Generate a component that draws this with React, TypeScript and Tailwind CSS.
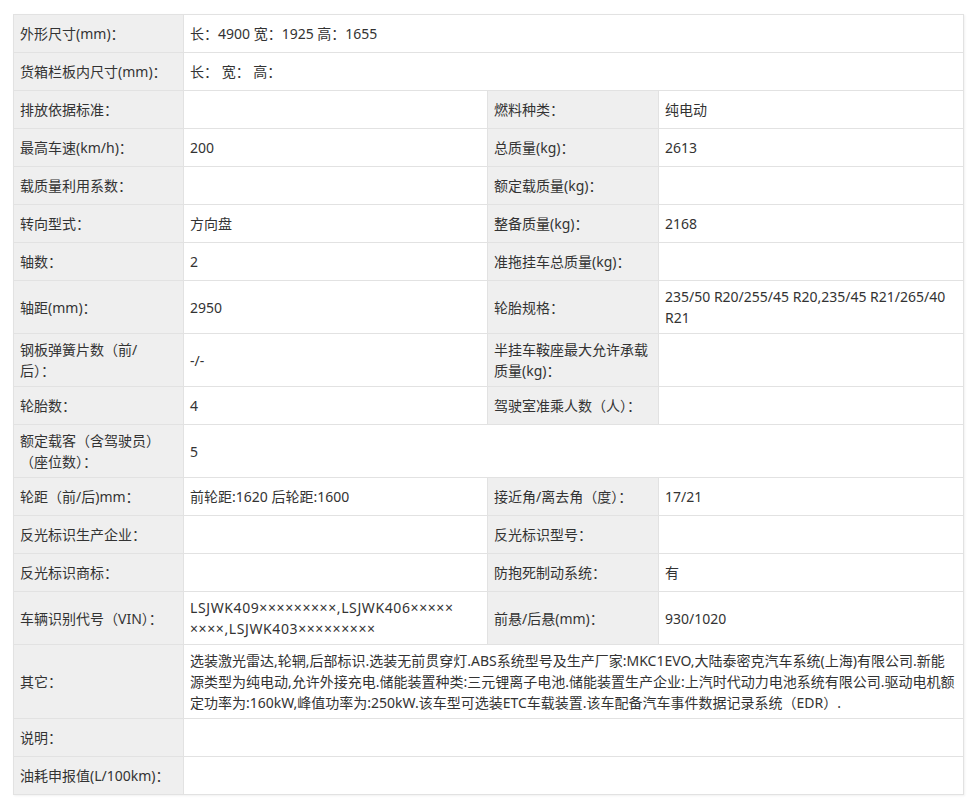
type Cell = { label: React.ReactNode; value?: React.ReactNode }
type Row = { cells: Cell[]; wide?: boolean }

const rows: Row[] = [
  { wide: true, cells: [{ label: '外形尺寸(mm)：', value: '长：4900 宽：1925 高：1655' }] },
  { wide: true, cells: [{ label: '货箱栏板内尺寸(mm)：', value: '长： 宽： 高：' }] },
  { cells: [{ label: '排放依据标准：' }, { label: '燃料种类：', value: '纯电动' }] },
  { cells: [{ label: '最高车速(km/h)：', value: '200' }, { label: '总质量(kg)：', value: '2613' }] },
  { cells: [{ label: '载质量利用系数：' }, { label: '额定载质量(kg)：' }] },
  { cells: [{ label: '转向型式：', value: '方向盘' }, { label: '整备质量(kg)：', value: '2168' }] },
  { cells: [{ label: '轴数：', value: '2' }, { label: '准拖挂车总质量(kg)：' }] },
  {
    cells: [
      { label: '轴距(mm)：', value: '2950' },
      {
        label: '轮胎规格：',
        value: (
          <>
            235/50 R20/255/45 R20,235/45 R21/265/40
            <br />
            R21
          </>
        ),
      },
    ],
  },
  {
    cells: [
      {
        label: (
          <>
            钢板弹簧片数（前/
            <br />
            后）：
          </>
        ),
        value: '-/-',
      },
      { label: '半挂车鞍座最大允许承载质量(kg)：' },
    ],
  },
  { cells: [{ label: '轮胎数：', value: '4' }, { label: '驾驶室准乘人数（人）：' }] },
  { wide: true, cells: [{ label: '额定载客（含驾驶员）（座位数）：', value: '5' }] },
  {
    cells: [
      { label: '轮距（前/后)mm：', value: '前轮距:1620 后轮距:1600' },
      { label: '接近角/离去角（度）：', value: '17/21' },
    ],
  },
  { cells: [{ label: '反光标识生产企业：' }, { label: '反光标识型号：' }] },
  { cells: [{ label: '反光标识商标：' }, { label: '防抱死制动系统：', value: '有' }] },
  {
    cells: [
      {
        label: '车辆识别代号（VIN）：',
        value: (
          <span className="tracking-[0.6px]">
            LSJWK409×××××××××,LSJWK406×××××
            <br />
            ××××,LSJWK403×××××××××
          </span>
        ),
      },
      { label: '前悬/后悬(mm)：', value: '930/1020' },
    ],
  },
  {
    wide: true,
    cells: [
      {
        label: '其它：',
        value: (
          <>
            选装激光雷达,轮辋,后部标识.选装无前贯穿灯.ABS系统型号及生产厂家:MKC1EVO,大陆泰密克汽车系统(上海)有限公司.新能
            <br />
            源类型为纯电动,允许外接充电.储能装置种类:三元锂离子电池.储能装置生产企业:上汽时代动力电池系统有限公司.驱动电机额
            <br />
            定功率为:160kW,峰值功率为:250kW.该车型可选装ETC车载装置.该车配备汽车事件数据记录系统（EDR）.
          </>
        ),
      },
    ],
  },
  { wide: true, cells: [{ label: '说明：' }] },
  { wide: true, cells: [{ label: '油耗申报值(L/100km)：' }] },
]

const labelTd = 'h-[38px] border border-[#e2e2e2] bg-[#efefef] px-[6px] py-[5px] align-middle'
const valueTd = 'h-[38px] border border-[#e2e2e2] bg-white px-[6px] py-[5px] align-middle'

export default function App() {
  return (
    <div className="min-h-screen bg-white pl-[13px] pt-[14px] font-['Noto_Sans','Noto_Sans_CJK_SC',sans-serif] text-[14px] leading-[21px] text-[#333]">
      <table className="w-[950px] table-fixed border-collapse shadow-[1px_1px_2px_rgba(0,0,0,0.06)]">
        <colgroup>
          <col className="w-[170px]" />
          <col className="w-[304px]" />
          <col className="w-[171px]" />
          <col className="w-[305px]" />
        </colgroup>
        <tbody>
          {rows.map((r, i) => (
            <tr key={i}>
              {r.wide ? (
                <>
                  <td className={labelTd}>{r.cells[0].label}</td>
                  <td className={valueTd} colSpan={3}>
                    {r.cells[0].value}
                  </td>
                </>
              ) : (
                r.cells.map((c, j) => <Pair key={j} cell={c} />)
              )}
            </tr>
          ))}
        </tbody>
      </table>
    </div>
  )
}

function Pair({ cell }: { cell: Cell }) {
  return (
    <>
      <td className={labelTd}>{cell.label}</td>
      <td className={valueTd}>{cell.value}</td>
    </>
  )
}
